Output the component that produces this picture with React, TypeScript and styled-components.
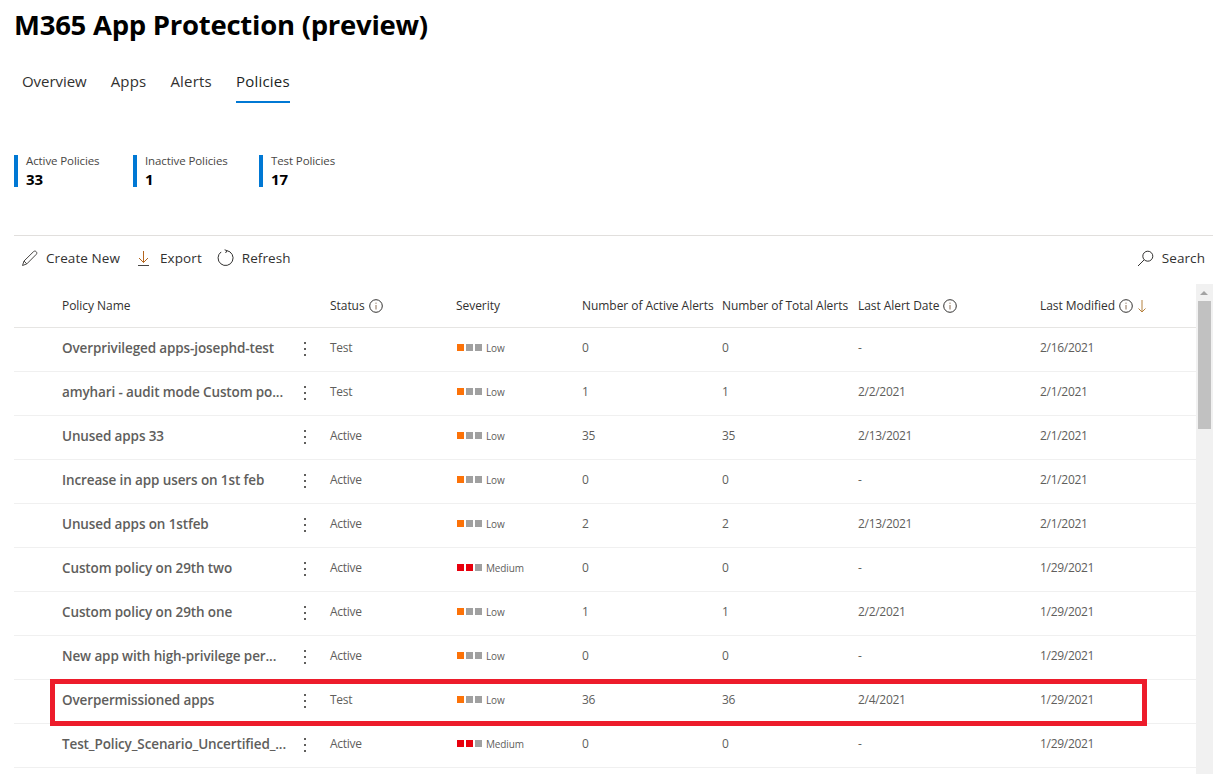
import React from 'react'
import styled, { createGlobalStyle } from 'styled-components'

const GlobalStyle = createGlobalStyle`
  html, body {
    margin: 0;
    padding: 0;
    background: #fff;
    overflow: hidden;
  }
  body {
    font-family: "Open Sans", "Noto Sans", "Liberation Sans", sans-serif;
    color: #323130;
  }
`

const Page = styled.div`
  width: 1216px;
  height: 774px;
  overflow: hidden;
  box-sizing: border-box;
  padding: 0 3px 0 14px;
  display: flex;
  flex-direction: column;
`

const Title = styled.h1`
  margin: 0;
  height: 51px;
  font-size: 27.5px;
  line-height: 50px;
  font-weight: 700;
  letter-spacing: -0.26px;
  color: #000;
  white-space: nowrap;
`

const Tabs = styled.nav`
  display: flex;
  gap: 24px;
  padding-left: 8px;
  height: 52px;
`

const Tab = styled.div<{ $active?: boolean }>`
  height: 52px;
  box-sizing: border-box;
  line-height: 61px;
  font-size: 15px;
  letter-spacing: 0.2px;
  color: ${p => (p.$active ? '#201f1e' : '#323130')};
  font-weight: ${p => (p.$active ? 500 : 400)};
  border-bottom: 2px solid ${p => (p.$active ? '#0078d4' : 'transparent')};
  &:first-child {
    letter-spacing: -0.05px;
  }
`

const Kpis = styled.section`
  display: flex;
  margin-top: 52px;
  height: 32px;
`

const Kpi = styled.div<{ $width: number }>`
  width: ${p => p.$width}px;
  box-sizing: border-box;
  border-left: 4px solid #0078d4;
  padding-left: 8px;
`

const KpiLabel = styled.div`
  font-size: 11.5px;
  line-height: 12px;
  letter-spacing: -0.1px;
  color: #484644;
`

const KpiValue = styled.div`
  font-size: 15px;
  line-height: 24px;
  font-weight: 700;
  color: #000;
`

const Toolbar = styled.div`
  margin-top: 48px;
  height: 49px;
  box-sizing: border-box;
  border-top: 1px solid #e1dfdd;
  display: flex;
  align-items: center;
  padding: 0 8px 4px 7px;
  gap: 15px;
`

const ToolButton = styled.div`
  display: flex;
  align-items: center;
  gap: 8px;
  font-size: 13.5px;
  letter-spacing: 0.08px;
  color: #323130;
  white-space: nowrap;
`

const SearchButton = styled(ToolButton)`
  margin-left: auto;
`

const Body = styled.div`
  display: flex;
  flex: 1;
  min-height: 0;
`

const Table = styled.div`
  width: 1182px;
  flex: none;
`

const Grid = styled.div`
  display: grid;
  grid-template-columns: 268px 126px 126px 140px 136px 182px 1fr;
  align-items: center;
  padding-left: 48px;
  box-sizing: border-box;
  position: relative;
  height: 44px;
`

const HeadRow = styled(Grid)`
  border-bottom: 1px solid #e6e5e3;
  font-size: 12px;
  letter-spacing: -0.05px;
  font-weight: 500;
  color: #323130;
`

const HeadCell = styled.div`
  display: flex;
  align-items: center;
  gap: 4px;
  white-space: nowrap;
`

const Row = styled(Grid)`
  border-bottom: 1px solid #f0f0f0;
  padding-bottom: 4px;
  font-size: 12px;
  letter-spacing: -0.3px;
  color: #605e5c;
`

const NameCell = styled.div`
  display: flex;
  align-items: center;
  justify-content: space-between;
  padding-right: 24px;
`

const Name = styled.span`
  font-size: 13.5px;
  font-weight: 600;
  letter-spacing: -0.12px;
  color: #605e5c;
  white-space: nowrap;
`

const Kebab = styled.span`
  display: flex;
  flex-direction: column;
  gap: 4px;
  width: 2px;
  margin-top: 2px;
  i {
    display: block;
    width: 2px;
    height: 2px;
    background: #605e5c;
  }
`

const Severity = styled.div`
  display: flex;
  align-items: center;
  padding-left: 1px;
  font-size: 10px;
  letter-spacing: -0.15px;
  color: #605e5c;
`

const Square = styled.i<{ $color: string }>`
  display: block;
  width: 7px;
  height: 7px;
  margin-right: 2px;
  background: ${p => p.$color};
`

const SeverityText = styled.span`
  margin-left: 2px;
`

const Callout = styled.div`
  position: absolute;
  left: 36px;
  top: -1px;
  width: 1097px;
  height: 47px;
  box-sizing: border-box;
  border: 5px solid #ed1c2b;
  pointer-events: none;
`

const Scrollbar = styled.div`
  width: 17px;
  flex: none;
  background: #f1f1f1;
  position: relative;
`

const ScrollArrow = styled.div`
  position: absolute;
  top: 7px;
  left: 4px;
  width: 0;
  height: 0;
  border-left: 4px solid transparent;
  border-right: 4px solid transparent;
  border-bottom: 4px solid #a3a3a3;
`

const ScrollThumb = styled.div`
  position: absolute;
  top: 17px;
  left: 2px;
  width: 13px;
  height: 128px;
  background: #c1c1c1;
`

const Pencil = () => (
  <svg width="17" height="17" viewBox="0 0 17 17" fill="none" stroke="#484644" strokeWidth="1">
    <path d="M1.5 15.5 L3 11 L12.6 1.6 C13.4 .9 14.4 .9 15.2 1.7 C16 2.5 16 3.5 15.3 4.3 L5.8 13.9 Z M3 11 L5.8 13.9" />
  </svg>
)

const Download = () => (
  <svg width="17" height="17" viewBox="0 0 17 17" fill="none" strokeWidth="1">
    <path d="M8.5 1 V12.5 M4 8 L8.5 12.5 L13 8" stroke="#b5651d" />
    <path d="M3 15.5 H14" stroke="#484644" />
  </svg>
)

const RefreshIcon = () => (
  <svg width="17" height="18" viewBox="0 0 17 18" fill="none" stroke="#323130" strokeWidth="1">
    <path d="M9.8 1.6 A7.5 7.5 0 1 1 4.2 2.9 M7.6 .8 L9.9 1.6 L8.6 4" />
  </svg>
)

const SearchIcon = () => (
  <svg width="17" height="17" viewBox="0 0 17 17" fill="none" stroke="#323130" strokeWidth="1">
    <circle cx="10.8" cy="6.2" r="5" />
    <path d="M7.2 9.8 L1 16" />
  </svg>
)

const Info = () => (
  <svg width="14" height="14" viewBox="0 0 14 14" fill="none">
    <circle cx="7" cy="7" r="6.3" stroke="#323130" />
    <path d="M7 6 V10.5 M7 3.6 V4.8" stroke="#8a6d52" />
  </svg>
)

const SortDown = () => (
  <svg width="10" height="14" viewBox="0 0 10 14" fill="none" stroke="#b5813f" strokeWidth="1">
    <path d="M5 1 V13 M1.5 9.5 L5 13 L8.5 9.5" />
  </svg>
)

type Level = 'Low' | 'Medium'

const policies: [string, string, Level, string, string, string, string][] = [
  ['Overprivileged apps-josephd-test', 'Test', 'Low', '0', '0', '-', '2/16/2021'],
  ['amyhari - audit mode Custom po...', 'Test', 'Low', '1', '1', '2/2/2021', '2/1/2021'],
  ['Unused apps 33', 'Active', 'Low', '35', '35', '2/13/2021', '2/1/2021'],
  ['Increase in app users on 1st feb', 'Active', 'Low', '0', '0', '-', '2/1/2021'],
  ['Unused apps on 1stfeb', 'Active', 'Low', '2', '2', '2/13/2021', '2/1/2021'],
  ['Custom policy on 29th two', 'Active', 'Medium', '0', '0', '-', '1/29/2021'],
  ['Custom policy on 29th one', 'Active', 'Low', '1', '1', '2/2/2021', '1/29/2021'],
  ['New app with high-privilege per...', 'Active', 'Low', '0', '0', '-', '1/29/2021'],
  ['Overpermissioned apps', 'Test', 'Low', '36', '36', '2/4/2021', '1/29/2021'],
  ['Test_Policy_Scenario_Uncertified_...', 'Active', 'Medium', '0', '0', '-', '1/29/2021'],
]

const squares: Record<Level, string[]> = {
  Low: ['#fc7208', '#a0a0a0', '#a0a0a0'],
  Medium: ['#e8000d', '#e8000d', '#a0a0a0'],
}

export default function App() {
  return (
    <Page>
      <GlobalStyle />
      <Title>M365 App Protection (preview)</Title>
      <Tabs>
        <Tab>Overview</Tab>
        <Tab>Apps</Tab>
        <Tab>Alerts</Tab>
        <Tab $active>Policies</Tab>
      </Tabs>
      <Kpis>
        <Kpi $width={119}>
          <KpiLabel>Active Policies</KpiLabel>
          <KpiValue>33</KpiValue>
        </Kpi>
        <Kpi $width={126}>
          <KpiLabel>Inactive Policies</KpiLabel>
          <KpiValue>1</KpiValue>
        </Kpi>
        <Kpi $width={100}>
          <KpiLabel>Test Policies</KpiLabel>
          <KpiValue>17</KpiValue>
        </Kpi>
      </Kpis>
      <Toolbar>
        <ToolButton><Pencil />Create New</ToolButton>
        <ToolButton><Download />Export</ToolButton>
        <ToolButton><RefreshIcon />Refresh</ToolButton>
        <SearchButton><SearchIcon />Search</SearchButton>
      </Toolbar>
      <Body>
        <Table>
          <HeadRow>
            <HeadCell>Policy Name</HeadCell>
            <HeadCell>Status <Info /></HeadCell>
            <HeadCell>Severity</HeadCell>
            <HeadCell>Number of Active Alerts</HeadCell>
            <HeadCell>Number of Total Alerts</HeadCell>
            <HeadCell>Last Alert Date <Info /></HeadCell>
            <HeadCell>Last Modified <Info /> <SortDown /></HeadCell>
          </HeadRow>
          {policies.map(([name, status, level, active, total, lastAlert, modified]) => (
            <Row key={name}>
              <NameCell>
                <Name>{name}</Name>
                <Kebab><i /><i /><i /></Kebab>
              </NameCell>
              <div>{status}</div>
              <Severity>
                {squares[level].map((c, i) => <Square key={i} $color={c} />)}
                <SeverityText>{level}</SeverityText>
              </Severity>
              <div>{active}</div>
              <div>{total}</div>
              <div>{lastAlert}</div>
              <div>{modified}</div>
              {name === 'Overpermissioned apps' && <Callout />}
            </Row>
          ))}
        </Table>
        <Scrollbar>
          <ScrollArrow />
          <ScrollThumb />
        </Scrollbar>
      </Body>
    </Page>
  )
}
